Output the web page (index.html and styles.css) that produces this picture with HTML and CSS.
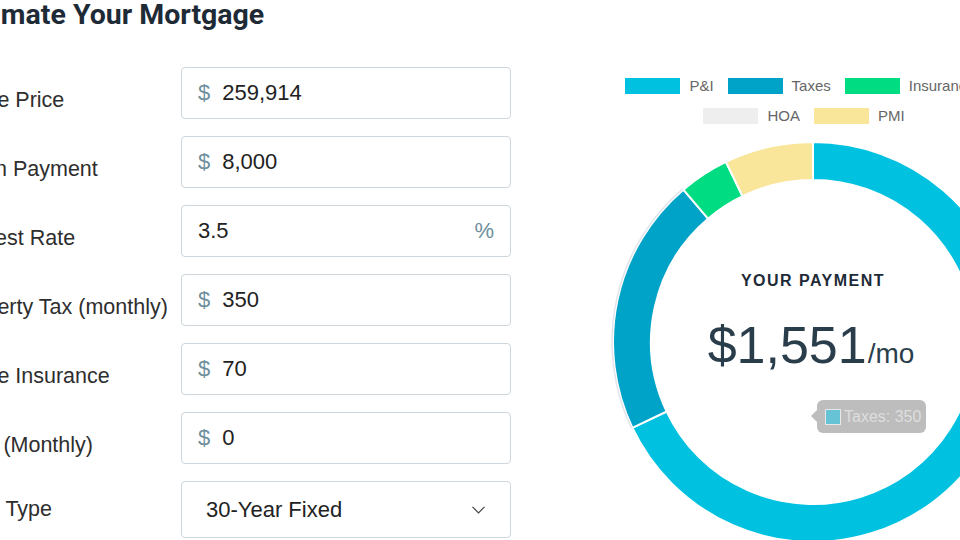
FILE: index.html
```html
<!DOCTYPE html>
<html lang="en">
<head>
    <meta charset="UTF-8">
    <meta name="viewport" content="width=device-width, initial-scale=1.0">
    <title>Estimate Your Mortgage</title>
    <link rel="stylesheet" href="styles.css">
</head>
<body>
    <div class="calculator">
        <div class="form-col">
            <h2 class="title">Estimate Your Mortgage</h2>

            <div class="field">
                <label>Home Price</label>
                <div class="input-box">
                    <span class="unit">$</span>
                    <span class="value">259,914</span>
                </div>
            </div>

            <div class="field">
                <label>Down Payment</label>
                <div class="input-box">
                    <span class="unit">$</span>
                    <span class="value">8,000</span>
                </div>
            </div>

            <div class="field">
                <label>Interest Rate</label>
                <div class="input-box">
                    <span class="value">3.5</span>
                    <span class="unit unit-right">%</span>
                </div>
            </div>

            <div class="field">
                <label>Property Tax (monthly)</label>
                <div class="input-box">
                    <span class="unit">$</span>
                    <span class="value">350</span>
                </div>
            </div>

            <div class="field">
                <label>Home Insurance</label>
                <div class="input-box">
                    <span class="unit">$</span>
                    <span class="value">70</span>
                </div>
            </div>

            <div class="field">
                <label>HOA (Monthly)</label>
                <div class="input-box">
                    <span class="unit">$</span>
                    <span class="value">0</span>
                </div>
            </div>

            <div class="field field-select">
                <label>Loan Type</label>
                <div class="select-box">
                    <span class="value">30-Year Fixed</span>
                    <svg class="chevron" width="13" height="8" viewBox="0 0 13 8">
                        <path d="M0.5 0.8 L6.5 6.8 L12.5 0.8" fill="none" stroke="#444" stroke-width="1.2"/>
                    </svg>
                </div>
            </div>
        </div>

        <div class="chart-col">
            <div class="legend">
                <div class="legend-row legend-row-first">
                    <span class="legend-item"><i class="swatch swatch-pi"></i>P&amp;I</span>
                    <span class="legend-item"><i class="swatch swatch-tax"></i>Taxes</span>
                    <span class="legend-item"><i class="swatch swatch-ins"></i>Insurance</span>
                </div>
                <div class="legend-row">
                    <span class="legend-item"><i class="swatch swatch-hoa"></i>HOA</span>
                    <span class="legend-item"><i class="swatch swatch-pmi"></i>PMI</span>
                </div>
            </div>

            <div class="donut">
                <svg width="420" height="420" viewBox="0 0 420 420">
                    <g stroke="#fff" stroke-width="2">
                        <path fill="#00c2e0" d="M210,10 A200,200 0 1 1 29.34,295.78 L63.67,279.48 A162,162 0 1 0 210,48 Z"/>
                        <path fill="#00a3c8" d="M29.34,295.78 A200,200 0 0 1 80.38,57.7 L105.01,86.64 A162,162 0 0 0 63.67,279.48 Z"/>
                        <path fill="#00dc82" d="M80.38,57.7 A200,200 0 0 1 122.96,29.94 L139.5,64.15 A162,162 0 0 0 105.01,86.64 Z"/>
                        <path fill="#f9e69a" d="M122.96,29.94 A200,200 0 0 1 210,10 L210,48 A162,162 0 0 0 139.5,64.15 Z"/>
                    </g>
                    <!-- hover outline on taxes slice -->
                    <path d="M28.5,296.2 A201,201 0 0 1 79.8,56.9" fill="none" stroke="#e2e5ee" stroke-width="1.5"/>
                </svg>

                <div class="donut-center">
                    <div class="payment-label">YOUR PAYMENT</div>
                    <div class="payment-amount">$1,551<span class="per">/mo</span></div>
                </div>

                <div class="tooltip">
                    <i class="tooltip-swatch"></i>Taxes: 350
                </div>
            </div>
        </div>
    </div>
</body>
</html>
```

FILE: styles.css
```css
body {
    margin: 0;
    width: 960px;
    height: 540px;
    overflow: hidden;
    background: #fff;
    font-family: 'Liberation Sans', Arial, sans-serif;
    color: #333;
}

/* page is scrolled a little to the right, so the left edge is cut */
.calculator {
    display: flex;
    margin-left: -44px;
}

.form-col {
    flex: none;
    width: 556px;
}

.title {
    margin: -2px 0 35px -3px;
    font-family: Roboto, 'Liberation Sans', sans-serif;
    font-size: 28.5px;
    line-height: 34px;
    font-weight: 700;
    color: #1e2b37;
}

.field {
    display: flex;
    margin-bottom: 17px;
}

.field label {
    width: 229px;
    flex: none;
    margin-left: -4px;
    padding-top: 21px;
    font-size: 21.5px;
    color: #2e2e2e;
}

.input-box,
.select-box {
    box-sizing: border-box;
    width: 330px;
    height: 52px;
    display: flex;
    align-items: center;
    padding: 0 16px;
    border: 1px solid #ccd6dc;
    border-radius: 4px;
    font-size: 22px;
}

.unit {
    color: #6e8f9d;
    margin-right: 12px;
}

.unit-right {
    margin: 0 0 0 auto;
}

.value {
    color: #222;
}

.field-select {
    align-items: center;
    margin-bottom: 0;
}

.field-select label {
    padding-top: 0;
}

.select-box {
    height: 57px;
    padding: 0 24px;
    justify-content: space-between;
}

.chevron {
    display: block;
    margin-right: 1px;
}

/* chart */
.chart-col {
    flex: none;
    width: 420px;
    margin-left: 91px;
}

.legend {
    margin-top: 71px;
    padding-right: 18px;
    font-size: 15px;
    color: #666;
}

.legend-row {
    display: flex;
    justify-content: center;
    align-items: center;
    height: 30px;
    white-space: nowrap;
}

.legend-row-first {
    padding-right: 8px;
}

.legend-item {
    display: flex;
    align-items: center;
    margin-right: 14px;
    line-height: 14px;
}

.legend-item:last-child {
    margin-right: 0;
}

.swatch {
    width: 55px;
    height: 16px;
    margin-right: 9px;
}

.swatch-pi { background: #00c2e0; }
.swatch-tax { background: #00a3c8; }
.swatch-ins { background: #00dc82; }
.swatch-hoa { background: #eeeeee; }
.swatch-pmi { background: #f9e69a; }

.donut {
    position: relative;
    width: 420px;
    height: 420px;
    margin-top: 1px;
}

.donut svg {
    display: block;
}

.donut-center {
    position: absolute;
    left: 0;
    right: 0;
    top: 140px;
    text-align: center;
    color: #1e2b37;
}

.payment-label {
    font-size: 16px;
    font-weight: 700;
    letter-spacing: 1.5px;
}

.payment-amount {
    margin-top: 25px;
    margin-right: 4px;
    font-size: 52px;
    color: #2a3d4b;
}

.per {
    font-size: 28px;
    margin-left: 1px;
}

.tooltip {
    position: absolute;
    left: 214px;
    top: 268px;
    height: 33px;
    display: flex;
    align-items: center;
    padding: 0 5px 0 8px;
    background: #bdbdbd;
    border-radius: 6px;
    color: #dedede;
    font-size: 16px;
    white-space: nowrap;
}

.tooltip::before {
    content: "";
    position: absolute;
    left: -6px;
    top: 10px;
    border-style: solid;
    border-width: 6px 6px 6px 0;
    border-color: transparent #bdbdbd transparent transparent;
}

.tooltip-swatch {
    box-sizing: border-box;
    width: 16px;
    height: 16px;
    margin-right: 3px;
    background: #66c3d6;
    border: 1px solid #e8e8e8;
}
```
